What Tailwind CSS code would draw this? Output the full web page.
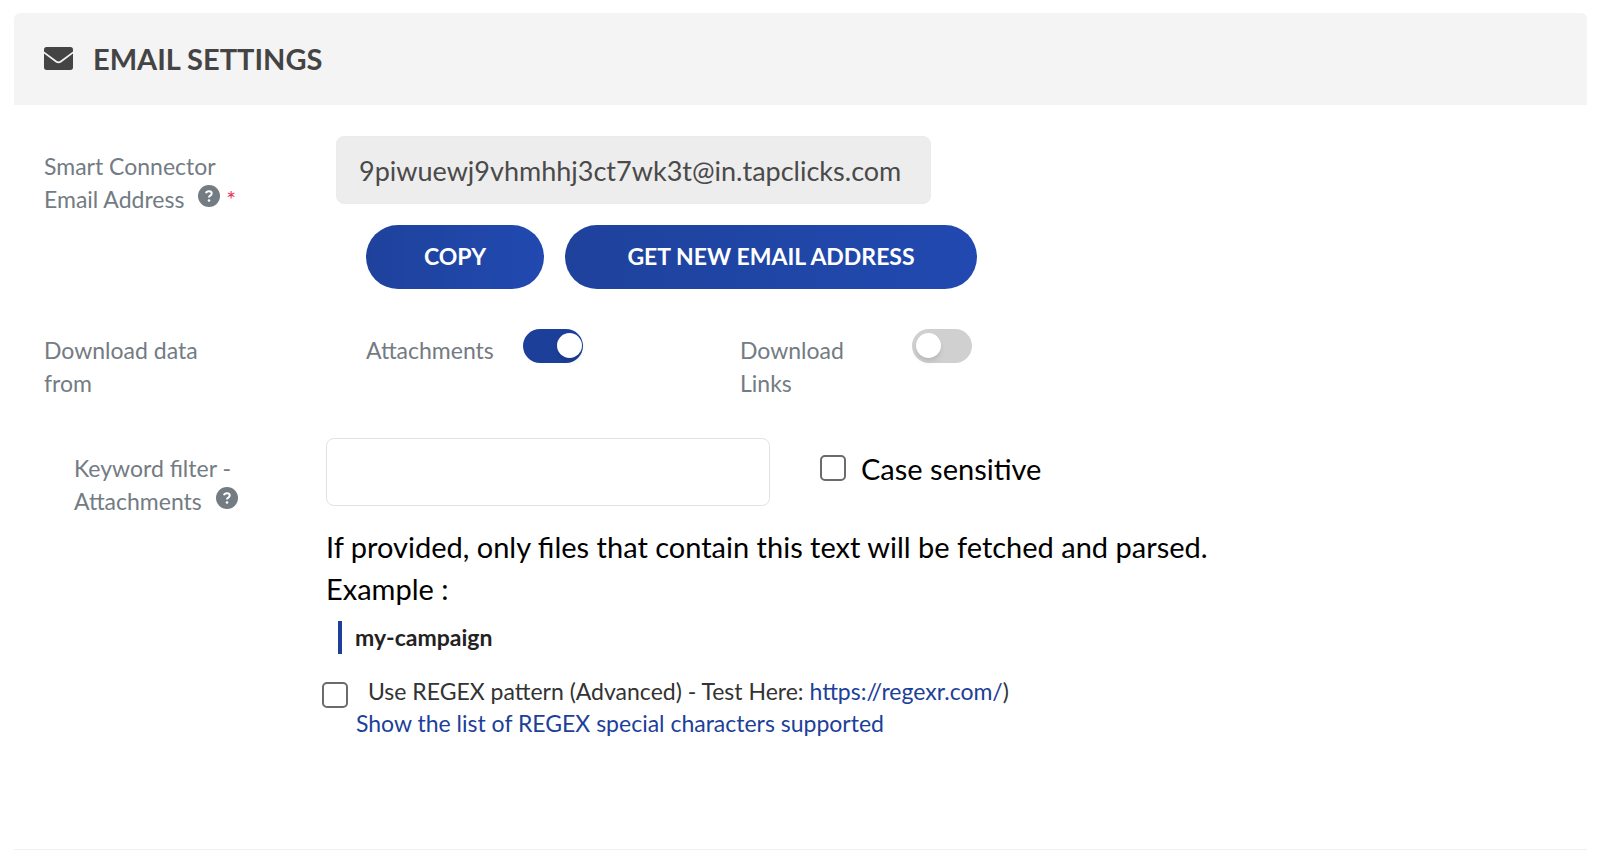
<!DOCTYPE html>
<html lang="en">

<head>
    <meta charset="UTF-8">
    <meta name="viewport" content="width=device-width, initial-scale=1.0">
    <title>Email Settings</title>

    <script src="https://cdn.jsdelivr.net/npm/@tailwindcss/browser@4"></script>
</head>

<body class="bg-white font-[Lato,sans-serif] text-[23px] leading-[33px] text-[#737b83]">
    <main class="pl-[14px] pr-[13px] pt-[13px]">
        <header class="flex items-center gap-5 h-[92px] pb-[2px] px-[30px] bg-[#f4f4f4] rounded-t-md text-[#444]">
            <svg class="w-[29px] h-[23px]" viewBox="0 0 28 22" fill="currentColor" aria-hidden="true">
                <path d="M2.500 0h23A2.500 2.500 0 0 1 28 2.500v1.700L15.800 13.200q-1.800 1.200-3.600 0L0 4.200V2.500A2.500 2.500 0 0 1 2.500 0z" />
                <path d="M0 6.200l11.500 8.700q2.500 1.600 5 0L28 6.200v13.300a2.500 2.500 0 0 1-2.500 2.500h-23A2.500 2.500 0 0 1 0 19.500z" />
            </svg>
            <h1 class="text-[29px] font-bold">EMAIL SETTINGS</h1>
        </header>

        <form class="px-[30px] pt-[31px]">
            <!-- connector address -->
            <section class="flex">
                <div class="w-[292px] shrink-0 pt-[14px]">
                    <label for="address">Smart Connector<br>Email Address</label>
                    <button type="button" aria-label="About the email address" class="ml-2 align-[1px]">
                        <svg class="size-[22px]" viewBox="0 0 22 22" aria-hidden="true">
                            <circle cx="11" cy="11" r="11" fill="#737b83" />
                            <path d="M8 8.300Q8.500 6.200 11 6.200q2.700 0 2.700 2.200 0 1.400-1.500 2.200-1.200.7-1.200 1.900" fill="none" stroke="#fff" stroke-width="2" />
                            <circle cx="11" cy="15.500" r="1.300" fill="#fff" />
                        </svg>
                    </button>
                    <span class="text-[#e8365d]">*</span>
                </div>
                <div>
                    <input id="address" type="text" readonly value="9piwuewj9vhmhhj3ct7wk3t@in.tapclicks.com"
                        class="w-[595px] h-[68px] px-[22px] rounded-lg border border-[#ebebeb] bg-[#ededed] text-[27px] text-[#4a4a4a]">
                    <div class="flex gap-[21px] pl-[30px] pt-[21px]">
                        <button type="button" class="h-16 w-[178px] pb-[2px] rounded-full bg-linear-to-r from-[#1e429c] to-[#2149b0] text-white font-bold">COPY</button>
                        <button type="button" class="h-16 w-[412px] pb-[2px] rounded-full bg-linear-to-r from-[#1e429c] to-[#2149b0] text-white font-bold">GET NEW EMAIL ADDRESS</button>
                    </div>
                </div>
            </section>

            <!-- download sources -->
            <section class="flex pt-10">
                <p class="w-[322px] shrink-0 pt-[5px]">Download data<br>from</p>
                <div class="flex w-[374px] gap-6">
                    <label for="attachments" class="w-[133px] pt-[5px]">Attachments</label>
                    <input id="attachments" type="checkbox" role="switch" checked
                        class="appearance-none w-[60px] h-[34px] rounded-full bg-[#d0d0d0] checked:bg-[#1c409a] p-1 before:block before:size-[25px] before:rounded-full before:bg-white before:shadow-md checked:before:ml-[30px]">
                </div>
                <div class="flex">
                    <label for="links" class="w-[172px] pt-[5px]">Download<br>Links</label>
                    <input id="links" type="checkbox" role="switch"
                        class="appearance-none w-[60px] h-[34px] rounded-full bg-[#d0d0d0] checked:bg-[#1c409a] p-1 before:block before:size-[25px] before:rounded-full before:bg-white before:shadow-md checked:before:ml-[30px]">
                </div>
            </section>

            <!-- keyword filter -->
            <section class="flex pt-[38px] pl-[30px]">
                <div class="w-[252px] shrink-0 pt-[14px]">
                    <label for="keyword">Keyword filter -<br>Attachments</label>
                    <button type="button" aria-label="About the keyword filter" class="ml-2 align-[1px]">
                        <svg class="size-[22px]" viewBox="0 0 22 22" aria-hidden="true">
                            <circle cx="11" cy="11" r="11" fill="#737b83" />
                            <path d="M8 8.300Q8.500 6.200 11 6.200q2.700 0 2.700 2.200 0 1.400-1.500 2.200-1.200.7-1.200 1.900" fill="none" stroke="#fff" stroke-width="2" />
                            <circle cx="11" cy="15.500" r="1.300" fill="#fff" />
                        </svg>
                    </button>
                </div>
                <div class="text-black">
                    <div class="flex">
                        <input id="keyword" type="text" class="w-[444px] h-[68px] px-[22px] rounded-lg border border-[#e2e2e2] text-[27px]">
                        <label class="flex items-center gap-[15px] pl-[50px] pb-2 text-[29px]">
                            <input type="checkbox" class="appearance-none size-[26px] rounded-[5px] border-2 border-[#6b6b6b] checked:bg-[#1c409a]">
                            Case sensitive
                        </label>
                    </div>
                    <p class="pt-5 text-[29px] leading-[42px]">If provided, only files that contain this text will be fetched and parsed.<br>Example :</p>
                    <p class="mt-[11px] ml-3 pl-[13px] border-l-4 border-[#1c409a] font-bold text-[#222]">my-campaign</p>
                    <div class="flex items-start gap-2 -ml-1 pt-[21px] leading-8">
                        <input id="regex" type="checkbox" class="appearance-none size-[26px] mt-[7px] rounded-[5px] border-2 border-[#6b6b6b] checked:bg-[#1c409a]">
                        <div class="text-[#333]">
                            <p class="pl-3"><label for="regex">Use REGEX pattern (Advanced) - Test Here:</label> <a href="https://regexr.com/" class="text-[#1c409a]">https://regexr.com/</a>)</p>
                            <a href="#characters" class="text-[#1c409a]">Show the list of REGEX special characters supported</a>
                        </div>
                    </div>
                </div>
            </section>
        </form>
        <hr class="mt-[110px] border-[#f0f0f0]">
    </main>
</body>

</html>
